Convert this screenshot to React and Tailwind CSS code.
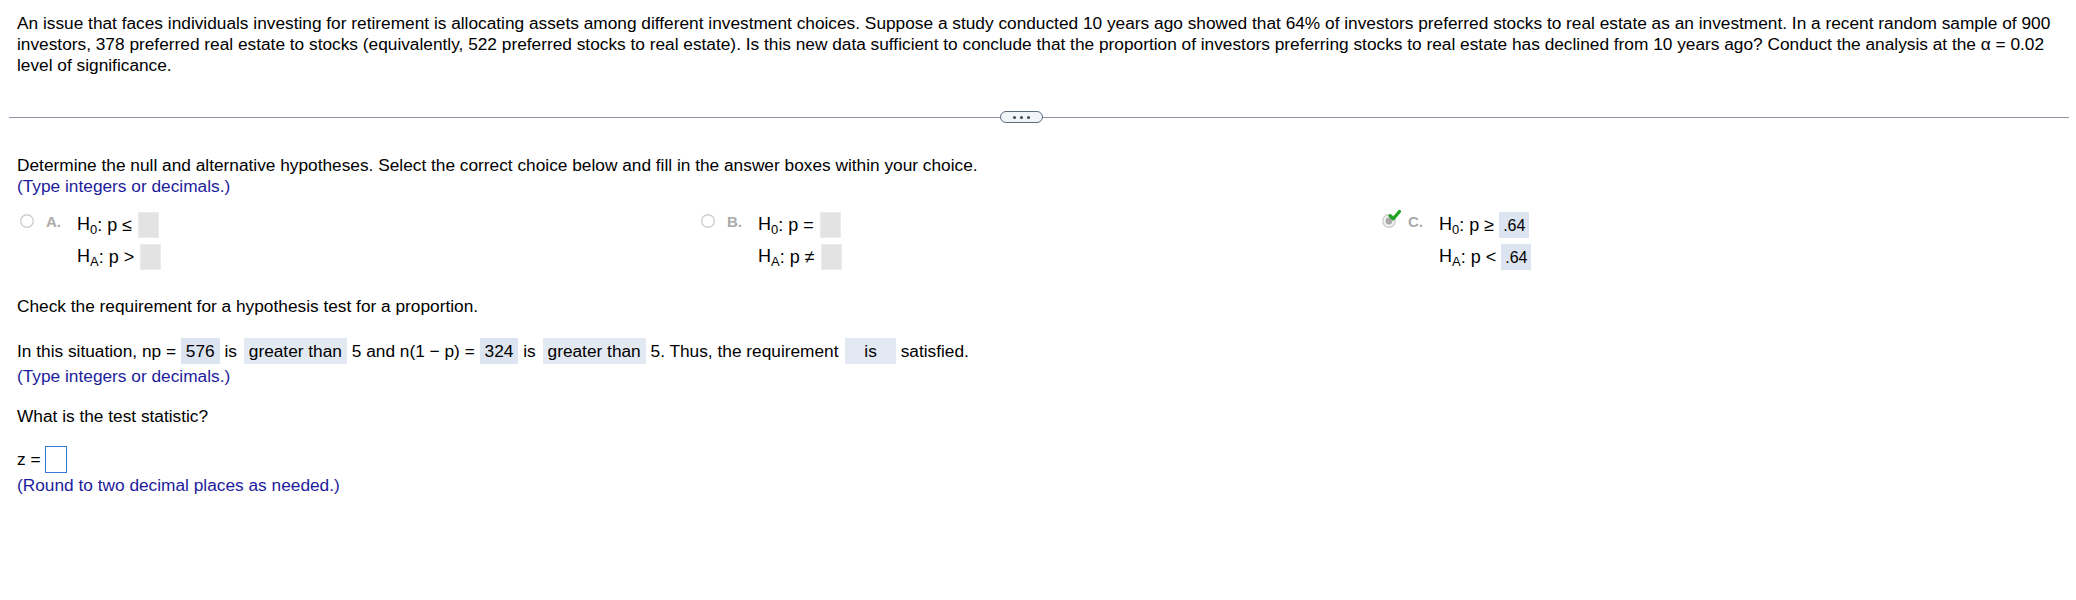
import React from "react";

function Radio({ checked }) {
  if (checked) {
    return (
      <svg width="14" height="14" viewBox="0 0 14 14" className="overflow-visible shrink-0">
        <circle cx="7" cy="7" r="6.3" fill="#f2f2f2" stroke="#cfcfcf" strokeWidth="1.4" />
        <circle cx="7" cy="7" r="3.4" fill="#a9a9a9" />
        <path d="M8 1.8 L11.3 4.8 L17.5 -2.5" fill="none" stroke="#1fa21f" strokeWidth="3.2" strokeLinecap="round" strokeLinejoin="round" />
      </svg>
    );
  }
  return (
    <svg width="14" height="14" viewBox="0 0 14 14" className="shrink-0">
      <circle cx="7" cy="7" r="6.3" fill="#fff" stroke="#cfcfcf" strokeWidth="1.4" />
    </svg>
  );
}

function H({ sub }) {
  return (
    <span className="inline-flex items-baseline">
      H<span className="text-[13px] translate-y-[4px]">{sub}</span>
    </span>
  );
}

function Blank() {
  return <span className="inline-block w-[21px] h-[26px] bg-[#e3e3e3] border border-[#ebebeb] ml-[6px]" />;
}

function Val({ children }) {
  return (
    <span className="inline-flex items-center h-[26px] px-[4px] bg-[#dce4f1] text-[16px] ml-[5px]">{children}</span>
  );
}

function Option({ letter, checked, rel0, relA, val }) {
  return (
    <div className="flex items-start">
      <div className="w-[26px] pt-[2px]">
        <Radio checked={checked} />
      </div>
      <div className="w-[31px] h-[26px] flex items-center text-[15px] font-bold text-[#aaaaaa] -mt-[4px]">{letter}.</div>
      <div className="flex flex-col gap-[6px] text-[18px]">
        <div className="flex items-center h-[26px]">
          <H sub="0" />
          <span>: p {rel0}</span>
          {val ? <Val>{val}</Val> : <Blank />}
        </div>
        <div className="flex items-center h-[26px]">
          <H sub="A" />
          <span>: p {relA}</span>
          {val ? <Val>{val}</Val> : <Blank />}
        </div>
      </div>
    </div>
  );
}

export default function App() {
  return (
    <div className="w-[2076px] h-[600px] bg-white text-black text-[17.3px] leading-[21px] font-['Liberation_Sans',Arial,sans-serif]">
      {/* question text */}
      <p className="px-[17px] pt-[13px]">
        An issue that faces individuals investing for retirement is allocating assets among different investment choices. Suppose a study conducted 10 years ago showed that 64% of investors preferred stocks to real estate as an investment. In a recent random sample of 900 investors, 378 preferred real estate to stocks (equivalently, 522 preferred stocks to real estate). Is this new data sufficient to conclude that the proportion of investors preferring stocks to real estate has declined from 10 years ago? Conduct the analysis at the α = 0.02 level of significance.
      </p>

      {/* divider with expander */}
      <div className="mt-[35px] ml-[9px] mr-[7px] flex items-center">
        <div className="w-[991px] h-px bg-[#8a94a3]" />
        <div className="w-[43px] h-[12px] rounded-full border border-[#5d6c7e] bg-[#f1f4f8] flex items-center justify-center gap-[4px]">
          <span className="w-[3px] h-[3px] rounded-full bg-[#3d4a5a]" />
          <span className="w-[3px] h-[3px] rounded-full bg-[#3d4a5a]" />
          <span className="w-[3px] h-[3px] rounded-full bg-[#3d4a5a]" />
        </div>
        <div className="flex-1 h-px bg-[#8a94a3]" />
      </div>

      <div className="px-[17px]">
        <p className="mt-[32px]">
          Determine the null and alternative hypotheses. Select the correct choice below and fill in the answer boxes within your choice.
        </p>
        <p className="text-[#1c1c9c]">(Type integers or decimals.)</p>

        <div className="mt-[15px] ml-[3px] grid grid-cols-[681px_681px_681px]">
          <Option letter="A" rel0="≤" relA=">" />
          <Option letter="B" rel0="=" relA="≠" />
          <Option letter="C" checked rel0="≥" relA="<" val=".64" />
        </div>

        <p className="mt-[26px]">Check the requirement for a hypothesis test for a proportion.</p>

        <div className="mt-[21px] h-[26px] leading-[26px] whitespace-nowrap">
          In this situation, np ={" "}
          <span className="inline-block align-top h-[26px] px-[5px] bg-[#dce4f1]">576</span>{" "}
          is{" "}
          <span className="inline-block align-top h-[26px] px-[5px] ml-[2px] bg-[#e3e9f3]">greater than</span>{" "}
          5 and n(1 − p) ={" "}
          <span className="inline-block align-top h-[26px] px-[5px] bg-[#dce4f1]">324</span>{" "}
          is{" "}
          <span className="inline-block align-top h-[26px] px-[5px] ml-[2px] bg-[#e3e9f3]">greater than</span>{" "}
          5. Thus, the requirement{" "}
          <span className="inline-block align-top h-[26px] px-[19px] ml-[2px] bg-[#e3e9f3]">is</span>{" "}
          satisfied.
        </div>
        <p className="mt-[2px] text-[#1c1c9c]">(Type integers or decimals.)</p>

        <p className="mt-[19px]">What is the test statistic?</p>

        <div className="mt-[19px] flex items-center h-[27px]">
          <span>z =</span>
          <span className="inline-block w-[22px] h-[27px] ml-[4px] bg-white border border-[#3a78d6]" />
        </div>
        <p className="mt-[2px] text-[#1c1c9c]">(Round to two decimal places as needed.)</p>
      </div>
    </div>
  );
}
